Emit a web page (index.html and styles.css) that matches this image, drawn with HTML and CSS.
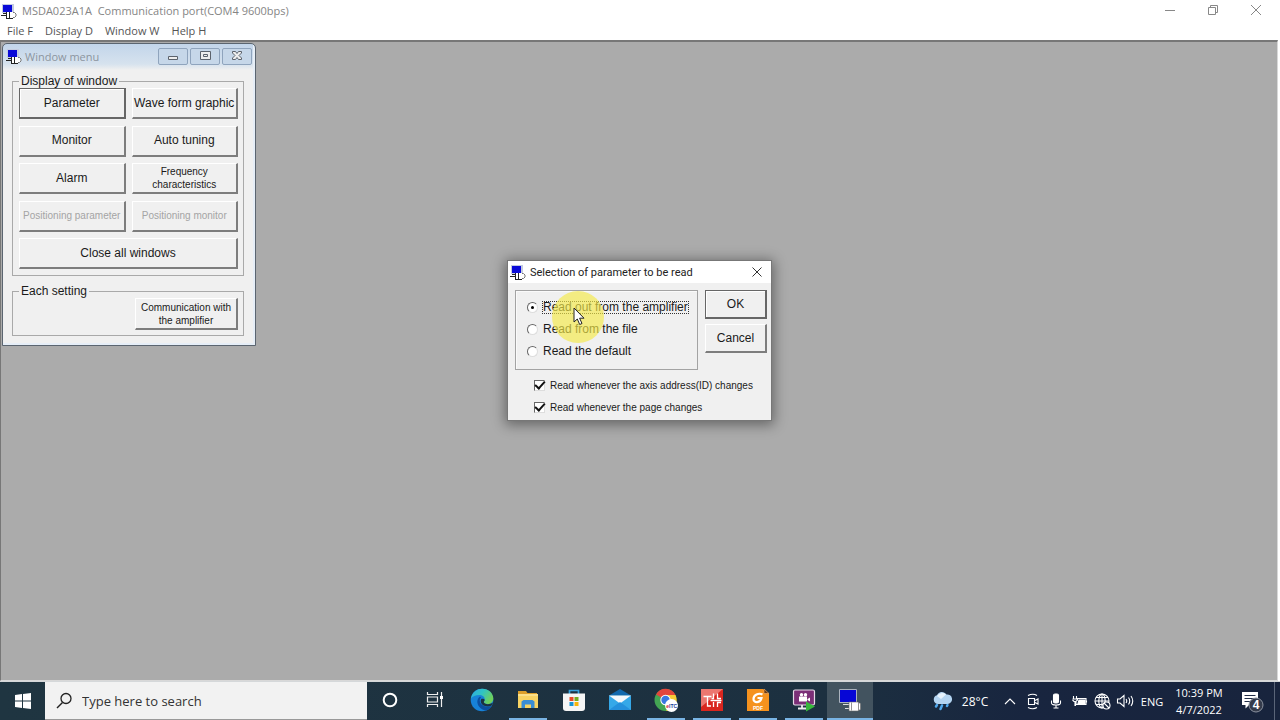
FILE: index.html
```html
<!DOCTYPE html>
<html lang="en">
<head>
<meta charset="utf-8">
<title>MSDA023A1A Communication port(COM4 9600bps)</title>
<link rel="stylesheet" href="styles.css">
</head>
<body>
<svg class="defs" aria-hidden="true">
  <symbol id="app" viewBox="0 0 16 16">
    <path d="M1 1h12v9H1z" fill="#c3cbe0"/>
    <path d="M2 2h9v7H2z" fill="#0a0ad8"/>
    <path d="M2 10.500h4M0 12.500h5" stroke="#222" fill="none"/>
    <path d="M12 9.500h1.500l1.500 1.500v2l-1.500 1.500H12" fill="#fff" stroke="#777"/>
    <path d="M5 9h7v6H5z" fill="#fff"/>
    <path d="M5.500 9v6.500M5 15.500h7M8.500 9v6" stroke="#222" fill="none"/>
  </symbol>
</svg>

<header class="titlebar">
  <svg class="app-icon"><use href="#app"/></svg>
  <h1 class="title">MSDA023A1A&nbsp; Communication port(COM4 9600bps)</h1>
  <div class="controls">
    <button aria-label="Minimize"><svg viewBox="0 0 12 12"><path d="M1 6.500h10"/></svg></button>
    <button aria-label="Restore"><svg viewBox="0 0 12 12"><path d="M1.500 3.500h7v7h-7zM3.500 3.500v-2h7v7h-2"/></svg></button>
    <button aria-label="Close"><svg viewBox="0 0 12 12"><path d="M1 1l10 10M11 1L1 11"/></svg></button>
  </div>
</header>
<nav class="menubar">
  <button>File F</button><button>Display D</button><button>Window W</button><button>Help H</button>
</nav>

<main class="workspace">
  <section class="child" aria-label="Window menu">
    <div class="child-bar">
      <svg class="app-icon"><use href="#app"/></svg>
      <h2 class="child-title">Window menu</h2>
      <div class="child-controls">
        <button aria-label="Minimize"><svg viewBox="0 0 14 12"><path d="M2.500 6.500h9v3h-9z"/></svg></button>
        <button aria-label="Maximize"><svg viewBox="0 0 14 12"><path d="M2.500 1.500h10v8h-10zM5.500 4.500h4v2h-4z"/></svg></button>
        <button aria-label="Close"><svg viewBox="0 0 14 12"><path d="M2.500 1.500h3L7 3.500l1.500-2h3v1.500L9 5.500l2.500 2.500v1.500h-3L7 7.500l-1.500 2h-3V8L5 5.500 2.500 3z"/></svg></button>
      </div>
    </div>
    <fieldset class="group">
      <legend>Display of window</legend>
      <div class="grid">
        <button class="btn focus">Parameter</button>
        <button class="btn">Wave form graphic</button>
        <button class="btn">Monitor</button>
        <button class="btn">Auto tuning</button>
        <button class="btn">Alarm</button>
        <button class="btn small">Frequency<br>characteristics</button>
        <button class="btn small" disabled>Positioning parameter</button>
        <button class="btn small" disabled>Positioning monitor</button>
        <button class="btn wide">Close all windows</button>
      </div>
    </fieldset>
    <fieldset class="group setting">
      <legend>Each setting</legend>
      <button class="btn small comm">Communication with<br>the amplifier</button>
    </fieldset>
  </section>

  <section class="dialog" role="dialog" aria-labelledby="dlg">
    <div class="dialog-bar">
      <svg class="app-icon"><use href="#app"/></svg>
      <h2 class="dialog-title" id="dlg">Selection of parameter to be read</h2>
      <button class="dialog-close" aria-label="Close"><svg viewBox="0 0 12 12"><path d="M1.500 1.500l9 9M10.500 1.500l-9 9"/></svg></button>
    </div>
    <div class="dialog-body">
      <div class="dialog-top">
        <div class="radios" role="radiogroup" aria-labelledby="dlg">
          <label><input type="radio" name="source" checked><span class="dotted">Read out from the amplifier</span></label>
          <label><input type="radio" name="source"><span>Read from the file</span></label>
          <label><input type="radio" name="source"><span>Read the default</span></label>
        </div>
        <div class="actions">
          <button class="btn focus">OK</button>
          <button class="btn">Cancel</button>
        </div>
      </div>
      <div class="checks">
        <label><input type="checkbox" checked><span>Read whenever the axis address(ID) changes</span></label>
        <label><input type="checkbox" checked><span>Read whenever the page changes</span></label>
      </div>
    </div>
    <div class="halo"></div>
    <svg class="cursor" viewBox="0 0 12 19"><path d="M1 1v14l3.300-3 2.400 5.500 2.300-1-2.400-5.300h4.400z" fill="#fff" stroke="#222"/></svg>
  </section>
</main>

<footer class="taskbar">
  <button class="start" aria-label="Start"><svg width="16" height="16" viewBox="0 0 16 16"><path d="M0 2l7-1v6.500H0zM8 1l8-1v7.500H8zM0 8.500h7V15l-7-1zM8 8.500h8V16l-8-1z" fill="#fff"/></svg></button>
  <label class="search">
    <svg width="18" height="18" viewBox="0 0 18 18"><circle cx="11" cy="6.500" r="5" fill="none" stroke="#222" stroke-width="1.300"/><path d="M7.500 10.500L2 16" stroke="#222" stroke-width="1.500"/></svg>
    <input type="text" placeholder="Type here to search" aria-label="Search">
  </label>
  <div class="tasks">
    <button aria-label="Cortana"><svg viewBox="0 0 24 24"><circle cx="12" cy="12" r="6.300" fill="none" stroke="#fff" stroke-width="2"/></svg></button>
    <button aria-label="Task view"><svg viewBox="0 0 24 24"><path d="M3.500 4v2.500h10V4M3.500 19v-2.500h10V19M3.500 9h10v5h-10zM17.500 4v15" fill="none" stroke="#eee" stroke-width="1.200"/><path d="M16 8h3v3h-3z" fill="#fff"/></svg></button>
    <button aria-label="Edge"><svg viewBox="0 0 24 24">
      <defs><linearGradient id="eg" x1="0" y1="0" x2="1" y2=".5"><stop offset="0" stop-color="#2fa8e6"/><stop offset=".5" stop-color="#2fc3c4"/><stop offset="1" stop-color="#70d05a"/></linearGradient></defs>
      <circle cx="12" cy="12" r="11.300" fill="#1782d8"/>
      <path d="M1 10.500C2 4 7 .7 12.300.7 18.500.7 23.300 5 23.300 10.500c0 3.500-2.500 5.500-5.500 5.500-2.800 0-4-1-4-2 0-.7 1-1 1-2.700 0-2.500-2.500-4.300-5.500-4.300C5.500 7 2.500 8.500 1 10.500z" fill="url(#eg)"/>
      <path d="M9.500 9C7 11 6.500 15 9 18.500c2 2.700 5 4 7.500 4 2.500-1 4.500-3 5.300-4.700-3 1.500-7.300 1.200-9.800-1C9.500 14.500 9 11.500 11 9.500c-.3-.6-1-.8-1.500-.5z" fill="#0c4f9f"/>
      <path d="M13.800 14c0 2 5 3.500 9.200.5-.5 1.400-1 2.400-1.700 3.200-3 1.300-6.500.8-8.800-1-1.800-1.500-2.300-3.500-1.300-5.700 1-.5 3.500 0 3.500 1 0 .8-.9 1.200-.9 2z" fill="#1c3240"/>
    </svg></button>
    <button class="open" aria-label="File Explorer"><svg viewBox="0 0 24 24"><path d="M2 3h8l1.500 2H21v4H2z" fill="#dc9f2b"/><path d="M2 6h20v14H2z" fill="#f8d363"/><path d="M2 6h20v2H2z" fill="#fbe08a"/><path d="M5.500 20v-6.500l2-1.500h9l2 1.500V20h-3.500v-3.500H9V20z" fill="#3a8dd4"/></svg></button>
    <button aria-label="Microsoft Store"><svg viewBox="0 0 24 24"><path d="M7.500 6V2.500h9V6" fill="none" stroke="#35a0dc" stroke-width="1.700"/><path d="M1 5.500h22V20q0 3-3 3H4q-3 0-3-3z" fill="#f5f5f5"/><path d="M7.500 9h4v4h-4z" fill="#e84a27"/><path d="M12.500 9h4v4h-4z" fill="#72ac22"/><path d="M7.500 14h4v4h-4z" fill="#1695d5"/><path d="M12.500 14h4v4h-4z" fill="#f7b50b"/></svg></button>
    <button aria-label="Mail"><svg viewBox="0 0 24 24"><path d="M1 7.500L12 1l11 6.500z" fill="#1269ae"/><path d="M1 7.500h22V22H1z" fill="#35a8e8"/><path d="M1 7.500h22L12 15.500z" fill="#f4f8fc"/><path d="M1 22l11-8 11 8z" fill="#2490dc"/></svg></button>
    <button class="open" aria-label="Chrome"><svg viewBox="0 0 24 24"><circle cx="11.500" cy="12" r="11" fill="#43a553"/><path d="M11.500 12L2 6.500A11 11 0 0 1 21.500 7z" fill="#e2463b"/><path d="M11.500 7h10a11 11 0 0 1-9.500 16l5-8z" fill="#f8cd37"/><circle cx="11.500" cy="12" r="5.200" fill="#fff"/><circle cx="11.500" cy="12" r="4.200" fill="#3978e0"/><circle cx="17.500" cy="17.500" r="6.500" fill="#fff"/><text x="17.700" y="19.500" class="mark mark-itc"><tspan fill="#d3202a">e</tspan>ITC</text></svg></button>
    <button class="open" aria-label="Servo software"><svg viewBox="0 0 24 24"><path d="M1 1h22v22H1z" fill="#d9261f"/><path d="M1 1h22L1 19z" fill="#ec7770"/><path d="M3.500 8.500h8M7.500 8.500v9.500h3.500M10.500 12.500h3.500M13.500 5.500v5h-2M17.500 5.500v5h3.500M13.500 19v-5M17.500 19v-4.500h3.500M13.500 12.500h8" fill="none" stroke="#fff" stroke-width="1.300"/></svg></button>
    <button class="open" aria-label="Foxit PDF"><svg viewBox="0 0 24 24"><path d="M1 1h16l6 5v17H1z" fill="#f5921e"/><path d="M18 1l5 4.500h-5z" fill="#6b3b16" stroke="#f8b064" stroke-width=".6"/><path d="M16.500 6.500c-4-2-9 .5-9 4.500 0 4.500 7 4 8-1h-4" fill="none" stroke="#fff" stroke-width="2.200"/><text x="12" y="21.500" class="mark mark-pdf">PDF</text></svg></button>
    <button class="open" aria-label="Screen recorder"><svg viewBox="0 0 24 24"><rect x="1.500" y="2" width="21" height="15" rx="1.500" fill="#7b2f77" stroke="#e6dbe7" stroke-width="1.200"/><path d="M10 17v3M6 20.500h9" stroke="#eee" stroke-width="1.800"/><circle cx="9.500" cy="6.700" r="1.700" fill="#fff"/><circle cx="13.500" cy="6.700" r="1.700" fill="#fff"/><path d="M7 8.500h8v5H7zM15.500 11l2.500-1.500v4L15.500 12z" fill="#fff"/><path d="M14 13.500l9 5-9 5z" fill="#36b83b"/></svg></button>
    <button class="open current" aria-label="MSDA023A1A"><svg viewBox="0 0 24 24"><path d="M1.500 1.500h17v13h-17z" fill="#0606d6" stroke="#aab2bd"/><path d="M5 16.500h6M7 20.500h4" fill="none" stroke="#ddd"/><path d="M11 14h8.500l3 1.500v6l-3 1.500H11z" fill="#fff" stroke="#666" stroke-width=".6"/><path d="M13.500 14.500v8M20.500 14.500v8" stroke="#777" stroke-width=".8"/></svg></button>
  </div>
  <div class="tray">
    <button class="weather"><svg width="22" height="20" viewBox="0 0 22 20"><path d="M6 13a4.500 4.500 0 0 1-1-8.800A5.500 5.500 0 0 1 14.500 3.500 4.800 4.800 0 0 1 16 13z" fill="#b4d5f2"/><path d="M5 5a6 6 0 0 1 9-1.500L9 8z" fill="#e7f3fd"/><path d="M5 14l-1 1.500M10 14.500L8.500 18M15.500 14l-.5 1" stroke="#50a9ee" stroke-width="2.500" stroke-linecap="round"/></svg><span>28°C</span></button>
    <button class="t" aria-label="Show hidden icons"><svg viewBox="0 0 18 18"><path d="M4 12l5-5 5 5"/></svg></button>
    <button class="t" aria-label="Meet now"><svg viewBox="0 0 18 18"><path d="M4.500 6.500h6v6h-6zM11 8.500l3-1.500v5l-3-1.500M4 3.500q5-2.500 9 0M4 15.500q5 2.500 9 0"/></svg></button>
    <button class="t" aria-label="Microphone"><svg viewBox="0 0 18 18"><rect x="6.500" y="2" width="5" height="9" rx="1.500" fill="#fff"/><path d="M4.500 8.500v2.500q0 2 4.500 2t4.500-2V8.500M9 13v3M6.500 16h5"/></svg></button>
    <button class="t" aria-label="Battery"><svg viewBox="0 0 18 18"><path d="M7 6.500h9v6H6V10M16.500 8.500v2M3.500 4v3M6.500 4v3M2.500 7h5v1l-1.500 1.500H4L2.500 8M5 10v3.500h1"/><path d="M9 8h6v3.500H8z" fill="#fff"/></svg></button>
    <button class="t" aria-label="Network"><svg viewBox="0 0 18 18"><circle cx="9" cy="9" r="7"/><ellipse cx="9" cy="9" rx="3.200" ry="7"/><path d="M2 9h14M3 5.500h12M3 12.500h7M9 2v14"/><circle cx="13.500" cy="13.500" r="3.500" class="ban"/><path d="M11 11l5 5"/></svg></button>
    <button class="t" aria-label="Volume"><svg viewBox="0 0 18 18"><path d="M1.500 7h2.500l4-3.500v11l-4-3.500H1.500zM10 7q1.500 2 0 4M12.500 5.500q2.500 3.500 0 7M15 4q3.500 5 0 10"/></svg></button>
    <button class="lang">ENG</button>
    <button class="clock"><span>10:39 PM</span><span>4/7/2022</span></button>
    <button class="note" aria-label="4 notifications"><svg width="24" height="24" viewBox="0 0 24 24"><path d="M2 3h16v13H9l-3.500 3.500V16H2z" fill="#fff"/><path d="M4.500 6.500h11M4.500 9.500h11M4.500 12.500h7" stroke="#222e48"/><circle cx="16" cy="16" r="7" fill="#343b4b" stroke="#8b929f"/><text x="16" y="20" class="mark mark-count">4</text></svg></button>
    <span class="peek"></span>
  </div>
</footer>
</body>
</html>
```
FILE: styles.css
```css
* { box-sizing: border-box; }
body {
  margin: 0;
  height: 100vh;
  display: flex;
  flex-direction: column;
  overflow: hidden;
  background: #fff;
  color: #1a1a1a;
  font-family: "Liberation Sans", Arial, sans-serif;
  font-size: 12px;
}
button { margin: 0; padding: 0; border: 0; background: none; color: inherit; font: inherit; }
h1, h2 { margin: 0; font-size: 12px; font-weight: 400; }
svg { display: block; flex: none; }
.defs { position: absolute; width: 0; height: 0; }
.app-icon { width: 16px; height: 16px; }

.titlebar { display: flex; align-items: center; height: 21px; padding-left: 1px; }
.title { flex: 1; margin-left: 5px; color: #858585; font: 11px "Open Sans", sans-serif; }
.controls { display: flex; align-self: flex-start; padding-right: 3px; }
.controls button { display: grid; place-items: center; width: 43px; height: 19px; }
.controls svg { width: 12px; height: 12px; fill: none; stroke: #888; }
.menubar { display: flex; gap: 12px; height: 19px; padding-left: 7px; color: #555; font: 11px "Open Sans", sans-serif; }
.menubar button { height: 19px; }

.workspace {
  position: relative;
  flex: 1;
  margin-right: 2px;
  border: solid #777;
  border-width: 2px 1px 1px 1px;
  border-right-color: #d8d8d8;
  border-bottom-color: #d8d8d8;
  background: #ababab;
}

.child {
  position: absolute;
  top: 1px;
  left: 1px;
  width: 254px;
  padding: 0 11px 9px 9px;
  border: 1px solid #5b6570;
  border-radius: 5px 5px 0 0;
  background: linear-gradient(#c2d5ea, #d6e2ee 20px, #f0f0f0 26px);
  box-shadow: inset -2px -2px #e6eef7;
}
.child-bar { display: flex; align-items: center; height: 24px; margin: 0 -8px 0 -6px; }
.child-title { flex: 1; margin-left: 3px; color: #8c959f; font: 11px "Open Sans", sans-serif; }
.child-controls { display: flex; gap: 2px; }
.child-controls button {
  display: grid;
  place-items: center;
  width: 30px;
  height: 17px;
  border: 1px solid #8fa4bd;
  border-radius: 2px;
  background: #c6d7e9;
}
.child-controls svg { width: 14px; height: 12px; fill: #eee; stroke: #5c636c; }

.group { min-width: 0; margin: 6px 0 0; padding: 0 5px 6px 6px; border: 1px solid #a9a9a9; }
.group legend { height: 14px; padding: 0 2px; line-height: 14px; }
.grid {
  display: grid;
  grid-template-columns: 1fr 1fr;
  column-gap: 6px;
  align-content: space-between;
  height: 181px;
}
.btn {
  min-height: 31px;
  border: solid;
  border-width: 1px 2px 2px 1px;
  border-color: #fff #7d7d7d #7d7d7d #fff;
  background: #f0f0f0;
  line-height: 13px;
}
.btn.focus { border-color: #666; box-shadow: inset 1px 1px #fff; }
.btn.small { font-size: 10px; }
.btn:disabled { color: #a4a4a4; }
.wide { grid-column: 1 / -1; }
.setting { display: flex; flex-direction: column; margin-top: 8px; padding-bottom: 5px; }
.comm { display: block; width: 103px; min-height: 32px; margin: 0 0 0 auto; }

.dialog {
  position: absolute;
  top: 218px;
  left: 506px;
  width: 265px;
  border: 1px solid #777;
  background: #f0f0f0;
  box-shadow: 0 2px 12px 2px rgba(0, 0, 0, .4);
}
.dialog-bar { display: flex; align-items: center; height: 22px; padding-left: 2px; background: #fff; }
.dialog-title { flex: 1; margin-left: 4px; color: #222; font: 11px Roboto, "Open Sans", sans-serif; }
.dialog-close { display: grid; place-items: center; width: 28px; height: 22px; }
.dialog-close svg { width: 12px; height: 12px; fill: none; stroke: #333; }
.dialog-body { padding: 7px 4px 2px 7px; }
.dialog-top { display: flex; gap: 7px; }
.radios { flex: 1; height: 80px; padding: 5px 0 0 11px; border: 1px solid #a3a3a3; box-shadow: inset 1px 1px #fafafa; }
.actions { display: flex; flex-direction: column; gap: 5px; width: 62px; }
.actions .btn { min-height: 29px; }
.radios label, .checks label { display: flex; align-items: center; height: 22px; gap: 5px; white-space: nowrap; }
.dotted { outline: 1px dotted #333; line-height: 11px; }
.checks { padding: 4px 0 0 19px; font-size: 10px; }
input[type="radio"], input[type="checkbox"] {
  appearance: none;
  flex: none;
  display: grid;
  place-items: center;
  width: 11px;
  height: 11px;
  margin: 0;
  border: 1px solid;
  border-color: #666 #ddd #ddd #666;
  background: #fff;
}
input[type="radio"] { border-radius: 50%; }
input[type="radio"]:checked::before { content: ""; width: 3px; height: 3px; border-radius: 50%; background: #000; }
input[type="checkbox"]:checked::before {
  content: "";
  width: 8px;
  height: 4px;
  margin-bottom: 2px;
  border: solid #111;
  border-width: 0 0 2px 2px;
  transform: rotate(-48deg);
}
.halo {
  position: absolute;
  top: 30px;
  left: 44px;
  width: 52px;
  height: 52px;
  border-radius: 50%;
  background: rgba(244, 234, 70, .65);
  pointer-events: none;
}
.cursor { position: absolute; top: 46px; left: 65px; width: 12px; height: 19px; }

.taskbar {
  display: flex;
  height: 39px;
  border-top: 1px solid #d5d8da;
  background: linear-gradient(90deg, #1f3541, #1c3040 65%, #18253f 80%, #18243d);
  color: #fff;
  font-family: "Open Sans", sans-serif;
}
.start { display: grid; place-items: center; width: 45px; }
.search {
  display: flex;
  align-items: center;
  gap: 9px;
  width: 322px;
  padding-left: 10px;
  border-bottom: 1px solid #999;
  background: #f2f2f2;
}
.search input { flex: 1; min-width: 0; padding: 0; border: 0; outline: 0; background: none; font: 13px "Open Sans", sans-serif; }
.search input::placeholder { color: #333; opacity: 1; }
.tasks { display: flex; }
.tasks button { display: grid; place-items: center; width: 46px; border-bottom: 2px solid transparent; }
.tasks svg { width: 24px; height: 24px; }
.tasks .open { background: linear-gradient(#79b4e4, #79b4e4) bottom / 38px 2px no-repeat border-box; }
.tasks .current { background-color: #42535f; background-size: 46px 2px; }
.mark { font-family: "Liberation Sans", sans-serif; font-weight: 700; text-anchor: middle; }
.mark-itc { font-size: 5px; fill: #203c9a; }
.mark-pdf { font-size: 5px; fill: #fff; }
.mark-count { font-size: 12px; fill: #fff; }
.tray { display: flex; align-items: stretch; margin-left: auto; font-size: 12px; }
.tray button { display: flex; align-items: center; justify-content: center; }
.weather { gap: 8px; width: 60px; margin-right: 8px; }
.tray .t { width: 23px; }
.t svg { width: 18px; height: 18px; fill: none; stroke: #fff; stroke-width: 1.1; }
.t .ban { fill: #18253f; }
.tray .lang { width: 32px; font-size: 11px; }
.tray .clock { flex-direction: column; width: 62px; font-size: 11px; line-height: 17px; }
.note { width: 44px; }
.peek { width: 6px; border-left: 1px solid #5a6578; }
```
